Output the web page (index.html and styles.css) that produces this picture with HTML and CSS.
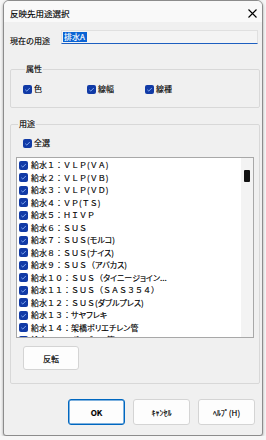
FILE: index.html
```html
<!DOCTYPE html>
<html lang="ja">
<head>
    <meta charset="UTF-8">
    <title>反映先用途選択</title>
    <link rel="stylesheet" href="styles.css">
</head>
<body>

    <div class="window">
        <div class="titlebar">
            <span class="title">反映先用途選択</span>
            <svg class="close" width="9" height="9" viewBox="0 0 9 9">
                <path d="M0.5 0.5 L8.5 8.5 M8.5 0.5 L0.5 8.5" stroke="#000" stroke-width="1.1" fill="none" />
            </svg>
        </div>

        <div class="content">
            <!-- 現在の用途 -->
            <div class="current-row">
                <span class="current-label">現在の用途</span>
                <div class="current-input"><span class="selected">排水A</span></div>
            </div>

            <!-- 属性 -->
            <fieldset class="group group-attr">
                <legend>属性</legend>
                <div class="attr-row">
                    <label class="cb cb-w1"><span class="check"><svg viewBox="0 0 9 9"><path d="M2.3 4.7 L3.8 6.1 L6.8 3" /></svg></span>色</label>
                    <label class="cb cb-w2"><span class="check"><svg viewBox="0 0 9 9"><path d="M2.3 4.7 L3.8 6.1 L6.8 3" /></svg></span>線幅</label>
                    <label class="cb"><span class="check"><svg viewBox="0 0 9 9"><path d="M2.3 4.7 L3.8 6.1 L6.8 3" /></svg></span>線種</label>
                </div>
            </fieldset>

            <!-- 用途 -->
            <fieldset class="group group-use">
                <legend>用途</legend>
                <label class="cb select-all"><span class="check"><svg viewBox="0 0 9 9"><path d="M2.3 4.7 L3.8 6.1 L6.8 3" /></svg></span>全選</label>

                <div class="listbox">
                    <div class="items" id="items"></div>
                    <div class="scrollbar"><div class="thumb"></div></div>
                </div>

                <button class="btn btn-invert">反転</button>
            </fieldset>

            <div class="buttons">
                <button class="btn btn-ok">OK</button>
                <button class="btn">ｷｬﾝｾﾙ</button>
                <button class="btn">ﾍﾙﾌﾟ(H)</button>
            </div>
        </div>
    </div>

    <script>
        // 用途リスト（カナ部分はプロポーショナル表示）
        const uses = [
            ['給水１：ＶＬＰ(ＶＡ)', ''],
            ['給水２：ＶＬＰ(ＶＢ)', ''],
            ['給水３：ＶＬＰ(ＶＤ)', ''],
            ['給水４：ＶＰ(ＴＳ)', ''],
            ['給水５：ＨＩＶＰ', ''],
            ['給水６：ＳＵＳ', ''],
            ['給水７：ＳＵＳ(', 'モルコ)'],
            ['給水８：ＳＵＳ(', 'ナイス)'],
            ['給水９：ＳＵＳ（', 'アバカス)'],
            ['給水１０：ＳＵＳ（', 'タイニージョイン...'],
            ['給水１１：ＳＵＳ（ＳＡＳ３５４）', ''],
            ['給水１２：ＳＵＳ(', 'ダブルプレス)'],
            ['給水１３：', 'サヤフレキ'],
            ['給水１４：', '架橋ポリエチレン管'],
            ['給水１５：', 'ポリブテン管']
        ];

        const list = document.getElementById('items');
        uses.forEach(function (u) {
            const row = document.createElement('div');
            row.className = 'item';
            row.innerHTML = '<span class="check"><svg viewBox="0 0 9 9"><path d="M2.3 4.7 L3.8 6.1 L6.8 3" /></svg></span>' +
                u[0] + '<span class="kana">' + u[1] + '</span>';
            list.appendChild(row);
        });
    </script>

</body>
</html>
```

FILE: styles.css
```css
body {
    margin: 0;
    background-color: #f6f6f6;
    font-family: "Noto Sans CJK JP", "Noto Sans", sans-serif;
    font-size: 8px;
    color: #000;
    -webkit-text-stroke: 0.15px #000;
}

.window {
    margin-left: 3px;
    width: 258px;
    height: 434px;
    border: 1px solid #8c8c8c;
    border-radius: 6px 6px 3px 3px;
    background-color: #f0f0f0;
    box-shadow: 0 1px 3px rgba(0, 0, 0, 0.35);
    overflow: hidden;
}

.titlebar {
    height: 21px;
    box-sizing: border-box;
    padding: 3px 5px 0 6px;
    display: flex;
    align-items: center;
    justify-content: space-between;
    background-color: #f9f9f9;
}

.title {
    font-size: 8.5px;
    line-height: 10px;
}

.close {
    display: block;
}

.content {
    padding: 0 2px 0 6px;
}

.current-row {
    margin-top: 8px;
    height: 14px;
    display: flex;
    align-items: flex-start;
}

.current-label {
    width: 51px;
    padding-top: 6px;
    line-height: 10px;
}

.current-input {
    width: 197px;
    height: 14px;
    box-sizing: border-box;
    padding: 1px 0 0 1px;
    background-color: #f4f4f4;
    border: 1px solid #e0e0e0;
    border-bottom: 1px solid #1d5fc0;
    line-height: 10px;
}

.selected {
    display: inline-block;
    padding: 0 2px 0 1px;
    background-color: #0a63d4;
    color: #fff;
    -webkit-text-stroke: 0.15px #fff;
}

.group {
    margin: 0;
    width: 250px;
    box-sizing: border-box;
    border: 1px solid #d8d8d8;
    border-radius: 2px;
}

.group legend {
    margin-left: 2px;
    padding: 0 1px;
    line-height: 10px;
}

.group-attr {
    margin-top: 20px;
    padding: 10px 0 13px 12px;
}

.group-use {
    margin-top: 11px;
    padding: 9px 0 13px 5px;
}

.attr-row {
    display: flex;
}

.cb {
    display: flex;
    align-items: center;
    height: 10px;
    line-height: 10px;
}

.cb-w1 {
    width: 64px;
}

.cb-w2 {
    width: 58px;
}

.check {
    width: 9px;
    height: 9px;
    margin-right: 2px;
    box-sizing: border-box;
    border-radius: 2px;
    background-color: #113aa6;
    flex-shrink: 0;
}

.check svg {
    display: block;
    width: 9px;
    height: 9px;
}

.check path {
    fill: none;
    stroke: #9cc2ff;
    stroke-width: 0.8;
}

.select-all {
    margin-left: 7px;
}

.listbox {
    margin-top: 9px;
    width: 238px;
    height: 181px;
    box-sizing: border-box;
    border: 1px solid #a8a8a8;
    background-color: #fff;
    display: flex;
    overflow: hidden;
}

.items {
    flex: 1;
    padding: 1px 0 0 2px;
}

.item {
    height: 12.5px;
    display: flex;
    align-items: center;
    line-height: 10px;
    white-space: nowrap;
}

.item .check {
    margin-right: 3px;
}

.kana {
    font-feature-settings: "palt";
}

.scrollbar {
    width: 12px;
    background-color: #f3f3f3;
}

.thumb {
    margin: 12px 0 0 3px;
    width: 6px;
    height: 12px;
    border-radius: 1px;
    background-color: #111;
}

.btn {
    font-family: "Noto Sans CJK JP", "Noto Sans", sans-serif;
    font-size: 8px;
    color: #000;
    -webkit-text-stroke: 0.15px #000;
    background-color: #fdfdfd;
    border: 1px solid #d4d4d4;
    border-radius: 3px;
    padding: 0;
}

.btn-invert {
    display: block;
    margin: 8px 0 0 7px;
    width: 56px;
    height: 24px;
}

.buttons {
    margin-top: 15px;
    padding-left: 58px;
    display: flex;
    gap: 8px;
}

.buttons .btn {
    width: 57px;
    height: 26px;
}

.btn-ok {
    border: 1px solid #0067c0;
    box-shadow: inset 0 0 0 0.5px #0067c0;
    font-weight: bold;
}
```
